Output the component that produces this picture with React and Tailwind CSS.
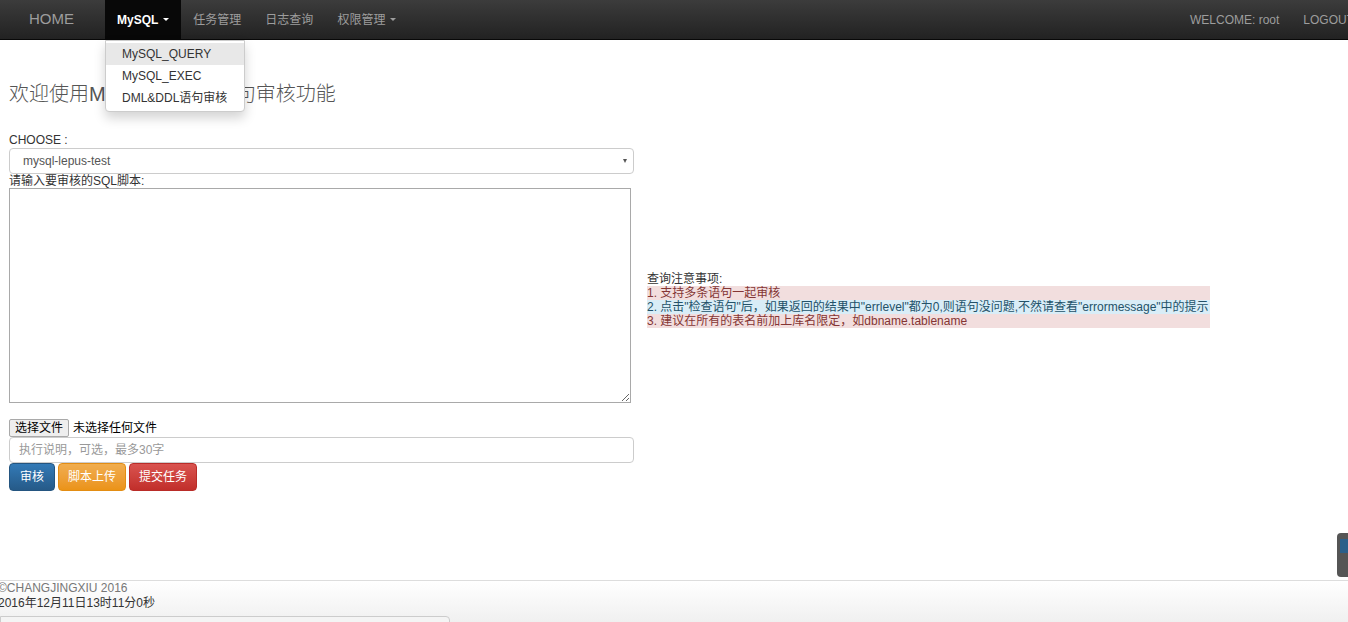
import React from "react";

const font = { fontFamily: '"Liberation Sans", "Noto Sans CJK SC", sans-serif' };

function Navbar() {
  return (
    <div className="h-10 flex items-stretch justify-between bg-gradient-to-b from-[#3c3c3c] to-[#222] border-b border-[#080808] text-[12px]">
      <div className="flex items-stretch">
        <a className="flex items-center pl-[29px] pr-[31px] text-[15px] text-[#9d9d9d]">HOME</a>
        <div className="relative flex">
          <a className="flex items-center px-3 bg-[#080808] text-white font-bold text-[12px]">
            MySQL
            <span className="ml-[5px] inline-block w-0 h-0 border-l-[3px] border-r-[3px] border-t-[3px] border-l-transparent border-r-transparent border-t-white" />
          </a>
          {/* open dropdown */}
          <div className="absolute left-0 top-10 z-10 w-[140px] bg-white border border-[#ccc] rounded-b shadow-[0_6px_12px_rgba(0,0,0,0.175)] py-[2px] text-[12px] text-[#333]">
            <div className="h-[22px] flex items-center pl-4 bg-[#e8e8e8]">MySQL_QUERY</div>
            <div className="h-[22px] flex items-center pl-4">MySQL_EXEC</div>
            <div className="h-[22px] flex items-center pl-4">DML&amp;DDL语句审核</div>
          </div>
        </div>
        <a className="flex items-center px-3 text-[#9d9d9d]">任务管理</a>
        <a className="flex items-center px-3 text-[#9d9d9d]">日志查询</a>
        <a className="flex items-center px-3 text-[#9d9d9d]">
          权限管理
          <span className="ml-[5px] inline-block w-0 h-0 border-l-[3px] border-r-[3px] border-t-[3px] border-l-transparent border-r-transparent border-t-[#9d9d9d]" />
        </a>
      </div>
      <div className="flex items-center text-[12px] text-[#9d9d9d] whitespace-nowrap">
        <span>WELCOME: root</span>
        <span className="ml-6 -mr-[6px]">LOGOUT</span>
      </div>
    </div>
  );
}

function Notes() {
  return (
    <div className="w-[563px] text-[12px] leading-[14px]">
      <div className="text-[#333]">查询注意事项:</div>
      <div className="bg-[#f2dede] text-[#843534]">1. 支持多条语句一起审核</div>
      <div className="bg-[#d9edf7] text-[#245269] whitespace-nowrap">
        2. 点击"检查语句"后，如果返回的结果中"errlevel"都为0,则语句没问题,不然请查看"errormessage"中的提示
      </div>
      <div className="bg-[#f2dede] text-[#843534]">3. 建议在所有的表名前加上库名限定，如dbname.tablename</div>
    </div>
  );
}

export default function App() {
  return (
    <div className="relative w-[1348px] h-[622px] overflow-hidden bg-white text-[#333]" style={font}>
      <Navbar />

      <div className="px-[9px]">
        <h3 className="mt-[40px] text-[20px] leading-[28px] text-[#555] font-light">
          欢迎使用MySQL数据库语句审核功能
        </h3>

        <div className="flex mt-[25px]">
          <div className="w-[625px] text-[12px]">
            <div className="leading-[14px] text-[#333]">CHOOSE :</div>
            <div className="mt-px h-[26px] flex items-center justify-between border border-[#ccc] rounded pl-[13px] pr-[6px] text-[#555]">
              <span>mysql-lepus-test</span>
              <span className="inline-block w-0 h-0 border-l-[2px] border-r-[2px] border-t-[4px] border-l-transparent border-r-transparent border-t-[#555]" />
            </div>
            <div className="leading-[14px]">请输入要审核的SQL脚本:</div>
            <textarea className="block w-[622px] h-[215px] border border-[#a9a9a9] resize" />
            <div className="mt-[16px] flex items-center text-[12px]">
              <span className="h-[18px] px-[5px] flex items-center border border-[#a9a9a9] bg-[#eee] text-[#000] rounded-[2px]">选择文件</span>
              <span className="ml-1 text-[#000]">未选择任何文件</span>
            </div>
            <div className="h-[26px] flex items-center border border-[#ccc] rounded pl-[9px] text-[#999]">
              执行说明，可选，最多30字
            </div>
            <div className="flex gap-[3px] text-white">
              <button className="h-[28px] px-[10px] rounded bg-gradient-to-b from-[#337ab7] to-[#265a88] border border-[#245580]">审核</button>
              <button className="h-[28px] px-[9px] rounded bg-gradient-to-b from-[#f0ad4e] to-[#eb9316] border border-[#e38d13]">脚本上传</button>
              <button className="h-[28px] px-[9px] rounded bg-gradient-to-b from-[#d9534f] to-[#c12e2a] border border-[#b92c28]">提交任务</button>
            </div>
          </div>
          <div className="ml-[13px] pt-[139px]">
            <Notes />
          </div>
        </div>
      </div>

      {/* side widget */}
      <div className="absolute right-0 top-[533px] w-[11px] h-[44px] rounded-l-[4px] bg-[#555] pl-[3px] pt-[6px]">
        <div className="w-full h-[14px] bg-[#2b5f8a]" />
      </div>

      <div className="absolute left-0 right-0 top-[580px] bottom-0 border-t border-[#ddd] bg-gradient-to-b from-white to-[#f0f0f0] text-[12px] leading-[15px]">
        <div className="-ml-[2px] text-[#777]">©CHANGJINGXIU 2016</div>
        <div className="-ml-[2px] text-[#333]">2016年12月11日13时11分0秒</div>
        <div className="mt-[5px] w-[450px] h-[10px] border border-[#ccc] rounded-tr bg-[#f4f4f4]" />
      </div>
    </div>
  );
}
